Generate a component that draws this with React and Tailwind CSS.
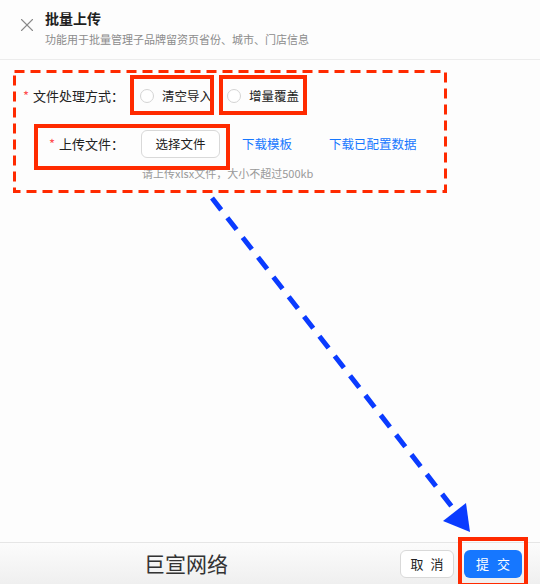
import { X } from 'lucide-react';

const font = { fontFamily: '"Noto Sans CJK SC", "Noto Sans", sans-serif' };

function Radio({ label }) {
  return (
    <label className="flex items-center gap-2 text-[12.5px] text-[#222]">
      <span className="w-[14px] h-[14px] rounded-full border border-[#d4d4d4] bg-white" />
      <span>{label}</span>
    </label>
  );
}

function Annotations() {
  return (
    <div className="absolute inset-0 pointer-events-none">
      <svg width="540" height="584" className="absolute left-0 top-0">
        <rect x="14.5" y="71.5" width="431" height="120" fill="none" stroke="#ff2a00" strokeWidth="3" strokeDasharray="10 6" />
        <line x1="212" y1="198" x2="456" y2="512" stroke="#0a3bff" strokeWidth="5" strokeDasharray="15 10" />
        <polygon points="470,532 443,521 466,503" fill="#0a3bff" />
      </svg>
      <div className="absolute left-[130px] top-[75px] w-[84px] h-[40px] border-4 border-[#ff2a00]" />
      <div className="absolute left-[219px] top-[75px] w-[88px] h-[40px] border-4 border-[#ff2a00]" />
      <div className="absolute left-[34px] top-[124px] w-[196px] h-[46px] border-4 border-[#ff2a00]" />
      <div className="absolute left-[458px] top-[537px] w-[70px] h-[50px] border-4 border-[#ff2a00]" />
    </div>
  );
}

export default function App() {
  return (
    <div className="relative w-[540px] h-[584px] bg-[#fdfdfd] flex flex-col overflow-hidden" style={font}>
      <header className="h-[60px] border-b border-[#ececec] flex items-start pl-[16px] pt-[8px] gap-[7px]">
        <X size={22} strokeWidth={1.2} className="text-[#8a8a8a] mt-[6px]" />
        <div>
          <h1 className="text-[14px] font-bold text-[#1f1f1f] leading-[20px]">批量上传</h1>
          <p className="text-[11px] text-[#8c8c8c] leading-[16px] mt-[3px]">功能用于批量管理子品牌留资页省份、城市、门店信息</p>
        </div>
      </header>

      <main className="flex-1 pt-[20px]">
        <div className="flex items-center h-[32px]">
          <div className="w-[126px] text-right text-[13px] text-[#222] pr-[2px]">
            <span className="text-[#ff4d4f] mr-[4px]">*</span>文件处理方式：
          </div>
          <div className="flex items-center gap-[15px] pl-[14px]">
            <Radio label="清空导入" />
            <Radio label="增量覆盖" />
          </div>
        </div>

        <div className="flex items-center h-[28px] mt-[18px]">
          <div className="w-[126px] text-right text-[13px] text-[#222] pr-[2px]">
            <span className="text-[#ff4d4f] mr-[4px]">*</span>上传文件：
          </div>
          <button className="ml-[15px] w-[79px] h-[28px] rounded-md border border-[#d9d9d9] bg-white text-[12.5px] text-[#222]">
            选择文件
          </button>
          <a className="ml-[22px] text-[12.5px] text-[#1677ff]">下载模板</a>
          <a className="ml-[37px] text-[12.5px] text-[#1677ff]">下载已配置数据</a>
        </div>
        <p className="ml-[142px] mt-[8px] text-[11px] text-[#999] leading-[14px]">请上传xlsx文件，大小不超过500kb</p>
      </main>

      <footer className="h-[42px] border-t border-[#e6e6e6] bg-gradient-to-b from-[#fcfcfc] to-[#efefef] flex items-center">
        <span className="ml-[144px] text-[21px] text-[#333] leading-none">巨宣网络</span>
        <div className="ml-auto mr-[18px] flex items-center gap-[10px]">
          <button className="w-[54px] h-[28px] rounded-md border border-[#d9d9d9] bg-white text-[13px] text-[#222] flex items-center justify-center gap-[7px]">
            <span>取</span><span>消</span>
          </button>
          <button className="w-[58px] h-[28px] rounded-md bg-[#1677ff] text-[13px] text-white flex items-center justify-center gap-[8px]">
            <span>提</span><span>交</span>
          </button>
        </div>
      </footer>

      <Annotations />
    </div>
  );
}
